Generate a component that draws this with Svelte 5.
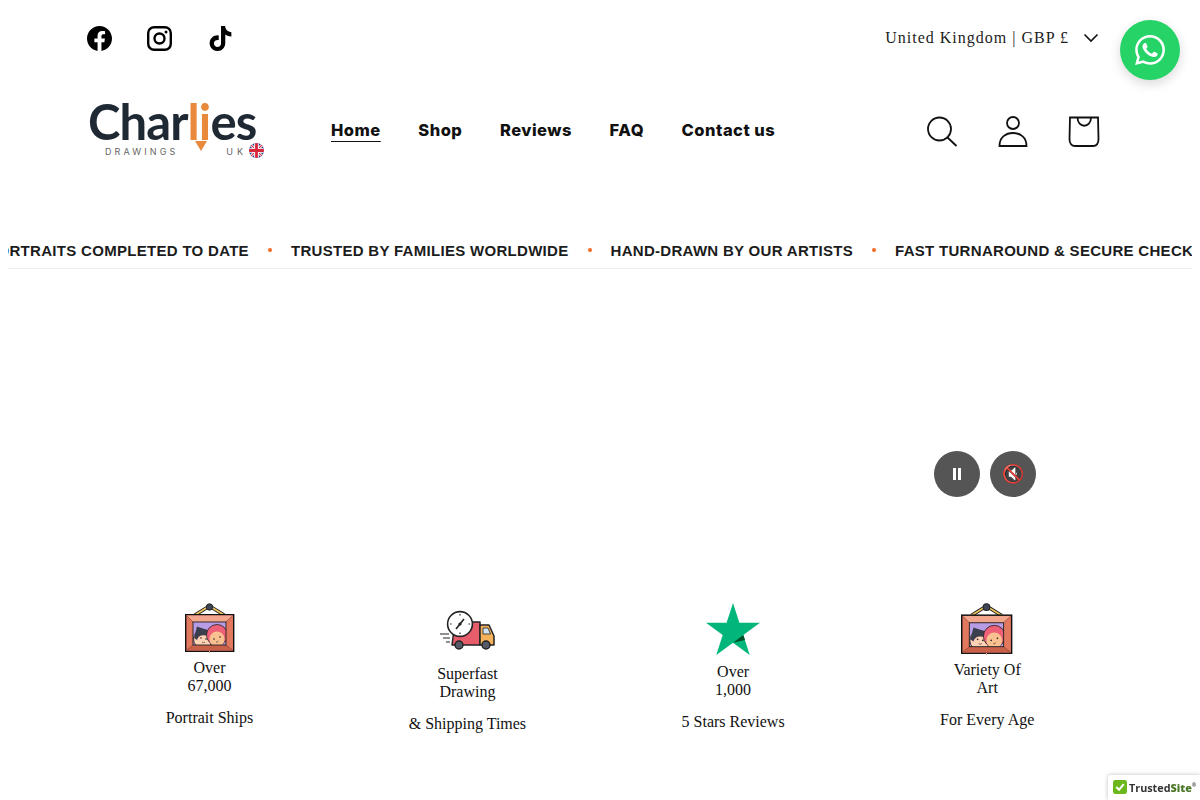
<script>
    const navLinks = ["Home", "Shop", "Reviews", "FAQ", "Contact us"];
    const messages = [
        "67,000+ PORTRAITS COMPLETED TO DATE",
        "TRUSTED BY FAMILIES WORLDWIDE",
        "HAND-DRAWN BY OUR ARTISTS",
        "FAST TURNAROUND & SECURE CHECKOUT",
    ];
</script>

{#snippet frame(size)}
    <svg class="pic" width={size} height={size} viewBox="0 0 50 50">
        <path d="M10 12 L24.5 3 L39 12" fill="none" stroke="#222" stroke-width="3.4" />
        <path d="M10 12 L24.5 3 L39 12" fill="none" stroke="#f2c75c" stroke-width="1.6" />
        <circle cx="24.5" cy="4" r="3.2" fill="#3d4656" stroke="#222" />
        <rect x="0.7" y="11.7" width="48" height="36.6" fill="#e2795f" stroke="#111" stroke-width="1.4" />
        <path d="M1.4 12.4 L8 19 L41 19 L48 12.4 Z" fill="#f1a68d" />
        <path d="M1.4 47.6 L8 42 L41 42 L48 47.6 Z" fill="#c9604a" />
        <path d="M1.4 12.4 L8 19 M48 12.4 L41 19 M1.4 47.6 L8 42 M48 47.6 L41 42" stroke="#8c4434" stroke-width="0.7" />
        <svg x="8" y="19" width="33" height="23" viewBox="0 0 33 23">
            <rect width="33" height="23" fill="#b99ce6" />
            <circle cx="10" cy="17" r="9.5" fill="#ffd2b5" stroke="#222" stroke-width="0.8" />
            <path d="M1 16 L4 4.5 L17 9 L16 14 C11 13 6 12 4 18 Z" fill="#3b3f4d" />
            <circle cx="24" cy="13" r="10.5" fill="#ee5f78" stroke="#222" stroke-width="0.8" />
            <circle cx="24" cy="17" r="7.6" fill="#fbc08f" />
            <circle cx="8" cy="16" r="0.8" fill="#222" />
            <circle cx="13" cy="17" r="0.8" fill="#222" />
            <circle cx="21" cy="17" r="0.8" fill="#222" />
            <circle cx="27" cy="15" r="0.8" fill="#222" />
            <path d="M9 20 q1.5 1.5 3 0 M23 20 q1.5 0.6 2.5 -1" fill="none" stroke="#222" stroke-width="0.6" />
        </svg>
        <rect x="8" y="19" width="33" height="23" fill="none" stroke="#222" stroke-width="0.9" />
        <path d="M24.5 48 v2" stroke="#f1a68d" stroke-width="1" />
    </svg>
{/snippet}

<div class="top">
    <div class="social">
        <svg width="25" height="25" viewBox="0 0 24 24"><path d="M24 12.073c0-6.627-5.373-12-12-12s-12 5.373-12 12c0 5.99 4.388 10.954 10.125 11.854v-8.385H7.078v-3.47h3.047V9.43c0-3.007 1.792-4.669 4.533-4.669 1.312 0 2.686.235 2.686.235v2.953H15.83c-1.491 0-1.956.925-1.956 1.874v2.25h3.328l-.532 3.47h-2.796v8.385C19.612 23.027 24 18.062 24 12.073z" /></svg>
        <svg width="25" height="25" viewBox="0 0 25 25">
            <rect x="1.2" y="1.2" width="22.6" height="22.6" rx="6" fill="none" stroke="#000" stroke-width="2.4" />
            <circle cx="12.5" cy="12.5" r="5" fill="none" stroke="#000" stroke-width="2.4" />
            <circle cx="19" cy="6" r="1.5" />
        </svg>
        <svg class="tiktok" width="25" height="25" viewBox="0 0 24 24"><path d="M12.525.02c1.31-.02 2.61-.01 3.91-.02.08 1.53.63 3.09 1.75 4.17 1.12 1.11 2.7 1.62 4.24 1.79v4.03c-1.44-.05-2.89-.35-4.2-.97-.57-.26-1.1-.59-1.62-.93-.01 2.92.01 5.84-.02 8.75-.08 1.4-.54 2.79-1.35 3.94-1.31 1.92-3.58 3.17-5.91 3.21-1.43.08-2.86-.31-4.08-1.03-2.02-1.19-3.44-3.37-3.65-5.71-.02-.5-.03-1-.01-1.49.18-1.9 1.12-3.72 2.58-4.96 1.66-1.44 3.98-2.13 6.15-1.72.02 1.48-.04 2.96-.04 4.44-.99-.32-2.15-.23-3.02.37-.63.41-1.11 1.04-1.36 1.75-.21.51-.15 1.07-.14 1.61.24 1.64 1.82 3.02 3.5 2.87 1.12-.01 2.19-.66 2.77-1.61.19-.33.4-.67.41-1.06.1-1.79.06-3.57.07-5.36.01-4.03-.01-8.05.02-12.07z" /></svg>
    </div>
    <div class="locale">
        <span>United Kingdom | GBP £</span>
        <svg width="16" height="10" viewBox="0 0 16 10"><path d="M1.5 1.5 L8 8 L14.5 1.5" fill="none" stroke="#111" stroke-width="1.6" /></svg>
    </div>
</div>

<a class="whatsapp" href="#top" aria-label="WhatsApp">
    <svg width="30" height="30" viewBox="0 0 24 24" fill="#fff"><path d="M17.472 14.382c-.297-.149-1.758-.867-2.03-.967-.273-.099-.471-.148-.67.15-.197.297-.767.966-.94 1.164-.173.199-.347.223-.644.075-.297-.15-1.255-.463-2.39-1.475-.883-.788-1.48-1.761-1.653-2.059-.173-.297-.018-.458.13-.606.134-.133.298-.347.446-.52.149-.174.198-.298.298-.497.099-.198.05-.371-.025-.52-.075-.149-.669-1.612-.916-2.207-.242-.579-.487-.5-.669-.51-.173-.008-.371-.01-.57-.01-.198 0-.52.074-.792.372-.272.297-1.04 1.016-1.04 2.479 0 1.462 1.065 2.875 1.213 3.074.149.198 2.096 3.2 5.077 4.487.709.306 1.262.489 1.694.625.712.227 1.36.195 1.871.118.571-.085 1.758-.719 2.006-1.413.248-.694.248-1.289.173-1.413-.074-.124-.272-.198-.57-.347m-5.421 7.403h-.004a9.87 9.87 0 01-5.031-1.378l-.361-.214-3.741.982.998-3.648-.235-.374a9.86 9.86 0 01-1.51-5.26c.001-5.45 4.436-9.884 9.888-9.884 2.64 0 5.122 1.03 6.988 2.898a9.825 9.825 0 012.893 6.994c-.003 5.45-4.437 9.884-9.885 9.884m8.413-18.297A11.815 11.815 0 0012.05 0C5.495 0 .16 5.335.157 11.892c0 2.096.547 4.142 1.588 5.945L.057 24l6.305-1.654a11.882 11.882 0 005.683 1.448h.005c6.554 0 11.89-5.335 11.893-11.893a11.821 11.821 0 00-3.48-8.413z" /></svg>
</a>

<header class="header">
    <div class="logo">
        <div class="word">Char<span class="orange">li</span>es<i class="tip"></i></div>
        <div class="sub">
            <span class="drawings">DRAWINGS</span>
            <span class="uk">UK</span>
            <svg class="flag" width="15" height="15" viewBox="0 0 16 16">
                <defs><clipPath id="round"><circle cx="8" cy="8" r="8" /></clipPath></defs>
                <g clip-path="url(#round)">
                    <rect width="16" height="16" fill="#2b3a80" />
                    <path d="M0 0 L16 16 M16 0 L0 16" stroke="#fff" stroke-width="3" />
                    <path d="M0 0 L16 16 M16 0 L0 16" stroke="#d8273c" stroke-width="1.2" />
                    <path d="M8 0 V16 M0 8 H16" stroke="#fff" stroke-width="5" />
                    <path d="M8 0 V16 M0 8 H16" stroke="#d8273c" stroke-width="3" />
                </g>
            </svg>
        </div>
    </div>
    <nav class="nav">
        {#each navLinks as link, i}
            <a href="#top" class:active={i === 0}>{link}</a>
        {/each}
    </nav>
    <div class="tools">
        <svg width="34" height="34" viewBox="0 0 34 34" fill="none" stroke="#111" stroke-width="1.8">
            <circle cx="12.5" cy="16" r="11.5" />
            <path d="M20.5 24.5 L29.5 33" />
        </svg>
        <svg width="32" height="34" viewBox="0 0 32 34" fill="none" stroke="#111" stroke-width="1.8">
            <circle cx="15" cy="10" r="6" />
            <path d="M1.5 33 C1.5 24 8 20 15 20 C22 20 28.5 24 28.5 33 Z" />
        </svg>
        <svg width="34" height="34" viewBox="0 0 34 34" fill="none" stroke="#111" stroke-width="1.8">
            <path d="M3 4.5 H31 L31.5 26 C31.5 31 29 33 26 33 H8 C5 33 2.5 31 2.5 26 Z" />
            <path d="M10.5 4.5 C10.5 15.5 24 15.5 24 4.5" />
        </svg>
    </div>
</header>

<div class="marquee">
    <div class="track">
        {#each messages as msg, i}
            {#if i > 0}<span class="dot"></span>{/if}
            <span>{msg}</span>
        {/each}
    </div>
</div>

<section class="hero">
    <button class="round" aria-label="Pause">
        <svg width="8" height="12" viewBox="0 0 8 12" fill="#fff">
            <rect width="3" height="12" />
            <rect x="5" width="3" height="12" />
        </svg>
    </button>
    <button class="round" aria-label="Mute">🔇</button>
</section>

<section class="features">
    <div class="feature">
        {@render frame(50)}
        <p>Over<br />67,000</p>
        <p>Portrait Ships</p>
    </div>
    <div class="feature">
        <svg class="pic" width="56" height="56" viewBox="0 0 56 56">
            <path d="M1 31 H10 M4 35 H11 M7 39 H11" stroke="#222" stroke-width="1.2" />
            <path d="M13 42 L16 19 H41 V42 Z" fill="#e85d6c" stroke="#222" stroke-width="1.5" stroke-linejoin="round" />
            <path d="M41 22 H50 L55 33 V42 H41 Z" fill="#f5b25d" stroke="#222" stroke-width="1.5" stroke-linejoin="round" />
            <path d="M44 25 H49 L51.5 31 H44 Z" fill="#cfe3f5" stroke="#222" stroke-width="0.8" />
            <circle cx="21" cy="21" r="12.4" fill="#fff" stroke="#222" stroke-width="1.6" />
            <path d="M17 26 L25 16" stroke="#222" stroke-width="1.6" />
            <circle cx="21" cy="21" r="1.6" fill="#222" />
            <path d="M21 11 v1.6 M21 29.5 v1.6 M11 21 h1.6 M29.5 21 h1.6" stroke="#222" stroke-width="1.2" />
            <circle cx="20" cy="42" r="4" fill="#555a66" stroke="#222" stroke-width="1.4" />
            <circle cx="47" cy="42" r="4" fill="#555a66" stroke="#222" stroke-width="1.4" />
        </svg>
        <p>Superfast<br />Drawing</p>
        <p>& Shipping Times</p>
    </div>
    <div class="feature">
        <svg class="pic" width="54" height="54" viewBox="0 0 54 54">
            <polygon points="27,0 33.4,19.8 54,19.8 37.3,32 43.7,52 27,39.7 10.3,52 16.7,32 0,19.8 20.6,19.8" fill="#00b67a" />
            <polygon points="37.3,32 39,37 27,39.7" fill="#005128" />
        </svg>
        <p>Over<br />1,000</p>
        <p>5 Stars Reviews</p>
    </div>
    <div class="feature">
        {@render frame(52)}
        <p>Variety Of<br />Art</p>
        <p>For Every Age</p>
    </div>
</section>

<div class="badge">
    <svg width="14" height="14" viewBox="0 0 15 15">
        <rect width="15" height="15" rx="2.5" fill="#6cb71c" />
        <path d="M3.5 7.5 L6.5 10.5 L11.5 4.5" fill="none" stroke="#fff" stroke-width="2.2" />
    </svg>
    <span>Trusted<b>Site</b><sup>®</sup></span>
</div>

<style>
    :global(body) {
        font-family: "Liberation Serif", serif;
        color: #111;
        background: #fff;
    }

    .top {
        display: flex;
        justify-content: space-between;
        align-items: center;
        height: 76px;
        padding: 0 101px 0 87px;
    }

    .social {
        display: flex;
        gap: 35px;
    }

    .tiktok {
        margin-left: 1px;
    }

    .locale {
        display: flex;
        align-items: center;
        gap: 14px;
        font-size: 16px;
        letter-spacing: 1px;
        color: #1c1c1c;
    }

    .whatsapp {
        position: fixed;
        top: 20px;
        right: 20px;
        width: 60px;
        height: 60px;
        border-radius: 50%;
        background: #25d366;
        box-shadow: 0 4px 12px rgba(0, 0, 0, 0.15);
        display: flex;
        align-items: center;
        justify-content: center;
    }

    .header {
        display: flex;
        align-items: center;
        height: 108px;
        padding: 0 99px 0 88px;
    }

    .logo {
        width: 243px;
    }

    .word {
        position: relative;
        width: fit-content;
        font-family: Lato, sans-serif;
        font-weight: 700;
        font-size: 49px;
        line-height: 41px;
        color: #1f2933;
        letter-spacing: -0.9px;
    }

    .orange {
        color: #e8893c;
    }

    .tip {
        position: absolute;
        left: 107px;
        bottom: -9px;
        border-left: 6px solid transparent;
        border-right: 6px solid transparent;
        border-top: 10px solid #e8893c;
    }

    .sub {
        display: flex;
        align-items: center;
        height: 16px;
        margin-top: 2px;
        font-family: Inter, sans-serif;
        font-size: 9px;
        color: #666;
    }

    .drawings {
        margin-left: 17px;
        letter-spacing: 3.1px;
    }

    .uk {
        margin-left: 48px;
        letter-spacing: 4px;
    }

    .flag {
        margin-left: 2px;
        transform: translateY(-1px);
    }

    .nav {
        display: flex;
        flex: 1;
        gap: 37.5px;
        font-family: Inter, sans-serif;
        font-weight: 800;
        font-size: 16.5px;
        letter-spacing: 0.5px;
    }

    .nav a {
        color: #111;
        text-decoration: none;
    }

    .nav a.active {
        text-decoration: underline;
        text-underline-offset: 5px;
        text-decoration-thickness: 1px;
    }

    .tools {
        display: flex;
        align-items: center;
        gap: 37px;
    }

    .marquee {
        margin: 55px 8px 0;
        height: 29px;
        overflow: hidden;
        border-bottom: 1px solid #eee;
    }

    .track {
        display: flex;
        align-items: center;
        gap: 19px;
        height: 24px;
        margin-top: -1px;
        margin-left: -82px;
        white-space: nowrap;
        font-family: "Liberation Sans", sans-serif;
        font-weight: 700;
        font-size: 15px;
        letter-spacing: 0.3px;
        color: #1c1c1c;
    }

    .dot {
        flex: none;
        width: 4px;
        height: 4px;
        border-radius: 50%;
        background: #f26b21;
    }

    .hero {
        display: flex;
        justify-content: flex-end;
        align-items: flex-end;
        gap: 10px;
        height: 228px;
        padding-right: 164px;
        box-sizing: border-box;
    }

    .round {
        display: flex;
        align-items: center;
        justify-content: center;
        width: 46px;
        height: 46px;
        padding: 0;
        border: none;
        border-radius: 50%;
        background: #555;
        color: #fff;
        font-size: 18px;
    }

    .features {
        display: flex;
        justify-content: space-around;
        align-items: flex-start;
        margin: 106px 88px 0;
        text-align: center;
        font-size: 16px;
        line-height: 18px;
    }

    .feature p {
        margin: 0 0 14px;
    }

    .pic {
        display: block;
        margin: 0 auto 6px;
    }

    .badge {
        position: fixed;
        right: 0;
        bottom: 0;
        width: 92px;
        height: 25px;
        box-sizing: border-box;
        padding: 5px 0 0 5px;
        display: flex;
        gap: 2px;
        background: #fff;
        border-radius: 3px 0 0 0;
        box-shadow: 0 0 4px rgba(0, 0, 0, 0.25);
        font-family: "Open Sans", sans-serif;
        font-weight: 700;
        font-size: 10.8px;
        line-height: 15px;
        color: #333;
        white-space: nowrap;
    }

    .badge b {
        color: #4d7a2a;
    }

    .badge sup {
        font-size: 5px;
        line-height: 0;
    }
</style>
